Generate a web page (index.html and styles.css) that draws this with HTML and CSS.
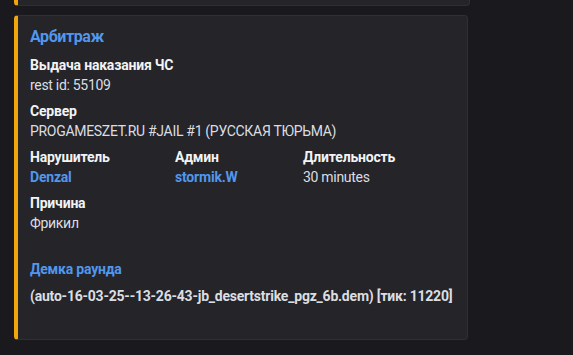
FILE: index.html
```html
<!DOCTYPE html>
<html lang="ru">
<head>
    <meta charset="UTF-8">
    <title>Арбитраж</title>
    <link rel="stylesheet" href="styles.css">
</head>
<body>
    <div class="chat">
        <div class="embed embed-prev"></div>

        <div class="embed">
            <div class="embed-title">Арбитраж</div>
            <div class="fields">
                <div class="field full">
                    <div class="field-name">Выдача наказания ЧС</div>
                    <div class="field-value">rest id: 55109</div>
                </div>
                <div class="field full">
                    <div class="field-name">Сервер</div>
                    <div class="field-value">PROGAMESZET.RU #JAIL #1 (РУССКАЯ ТЮРЬМА)</div>
                </div>
                <div class="field">
                    <div class="field-name">Нарушитель</div>
                    <div class="field-value link">Denzal</div>
                </div>
                <div class="field">
                    <div class="field-name">Админ</div>
                    <div class="field-value link">stormik.W</div>
                </div>
                <div class="field">
                    <div class="field-name">Длительность</div>
                    <div class="field-value">30 minutes</div>
                </div>
                <div class="field full">
                    <div class="field-name">Причина</div>
                    <div class="field-value">Фрикил</div>
                </div>
            </div>
            <div class="demo">
                <div class="demo-link">Демка раунда</div>
                <div class="demo-file">(auto-16-03-25--13-26-43-jb_desertstrike_pgz_6b.dem) [тик: 11220]</div>
            </div>
        </div>
    </div>
</body>
</html>
```

FILE: styles.css
```css
body { margin: 0; background-color: #1a1a1e; font-family: Roboto, "Noto Sans", sans-serif; color: #dbdee1; }
.chat { padding-left: 14px; }
.embed { width: 437px; background-color: #242429; border: 1px solid #2f2f35; border-left: 4px solid #f2a60c; border-radius: 4px; padding: 10px 0 34px 12px; }
.embed-prev { width: 451px; height: 5px; padding: 0; border-top: none; border-radius: 0 0 4px 4px; margin-bottom: 9px; }
.embed-title { font-size: 16px; font-weight: 700; line-height: 22px; color: #5197ed; margin-bottom: 8px; letter-spacing: -0.4px; }
.fields { display: grid; grid-template-columns: 137px 120px auto; column-gap: 8px; row-gap: 8px; }
.field.full { grid-column: 1 / -1; }
.field-name { font-size: 14px; font-weight: 700; line-height: 18px; color: #f2f3f5; margin-bottom: 2px; letter-spacing: -0.2px; }
.field-value { font-size: 14px; line-height: 18px; letter-spacing: -0.3px; }
.link { color: #5197ed; font-weight: 700; letter-spacing: -0.2px; }
.demo { margin-top: 28px; }
.demo-link { font-size: 14px; font-weight: 700; line-height: 18px; color: #5197ed; letter-spacing: -0.2px; }
.demo-file { font-size: 14px; font-weight: 700; line-height: 18px; margin-top: 9px; white-space: nowrap; letter-spacing: -0.22px; }
```
